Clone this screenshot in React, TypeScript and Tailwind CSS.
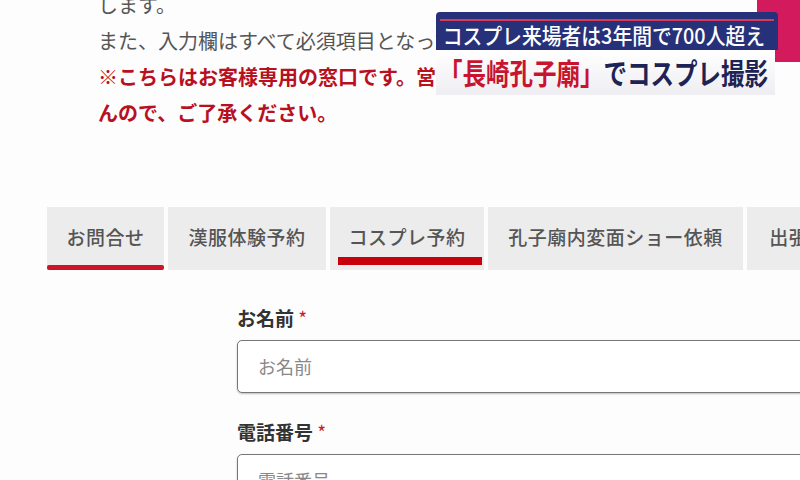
const jp = { fontFamily: '"Noto Sans CJK JP", "Noto Sans", sans-serif' }

const tabs = [
  { label: 'お問合せ', w: 'w-[117px]', line: 'thin' },
  { label: '漢服体験予約', w: 'w-[158px]', line: '' },
  { label: 'コスプレ予約', w: 'w-[154px]', line: 'thick' },
  { label: '孔子廟内変面ショー依頼', w: 'w-[255px]', line: '' },
  { label: '出張変面ショー依頼', w: 'w-[220px]', line: '' },
]

const Tab = ({ label, w, line }: { label: string; w: string; line: string }) => {
  return (
    <div className={`relative shrink-0 h-[63px] bg-[#ececec] flex items-center justify-center ${w}`}>
      <span className="text-[19px] tracking-[0.5px] text-[#555] font-medium whitespace-nowrap pb-[3px]">{label}</span>
      {line === 'thin' ? <div className="absolute left-0 right-0 bottom-0 h-[5px] bg-[#cf1228] rounded-[2px]"></div> : ''}
      {line === 'thick' ? <div className="absolute left-[8px] right-[2px] bottom-[5px] h-[8px] bg-[#c8000c]"></div> : ''}
    </div>
  )
}

const Field = ({ label, placeholder }: { label: string; placeholder: string }) => {
  return (
    <div className="flex flex-col">
      <div className="text-[19px] font-bold text-[#333] h-[34px] leading-[34px]">
        {label} <span className="text-[#d01a2a] font-normal">*</span>
      </div>
      <div className="mt-[5px] h-[53px] w-[600px] border-[1.5px] border-[#777] rounded-[5px] bg-white shadow-[0_1px_2px_rgba(0,0,0,0.25)] flex items-center pl-[20px]">
        <span className="text-[18px] text-[#888]">{placeholder}</span>
      </div>
    </div>
  )
}

export default function App() {
  return (
    <div className="relative w-[800px] h-[480px] overflow-hidden bg-[#fdfdfd]" style={jp}>
      <div className="pl-[98px] mt-[-13px] text-[20px] leading-[36px] whitespace-nowrap">
        <div className="text-[#555]">します。</div>
        <div className="text-[#555]">また、入力欄はすべて必須項目となっておりますので、ご入力をお願いいたします。</div>
        <div className="text-[#b8101e] font-bold">※こちらはお客様専用の窓口です。営業のお電話はお受けしておりませ</div>
        <div className="text-[#b8101e] font-bold">んので、ご了承ください。</div>
      </div>

      <div className="flex gap-[4px] pl-[47px] mt-[76px]">
        {tabs.map((t) => (
          <Tab key={t.label} label={t.label} w={t.w} line={t.line} />
        ))}
      </div>

      <div className="flex flex-col gap-[22px] pl-[237px] mt-[31px]">
        <Field label="お名前" placeholder="お名前" />
        <Field label="電話番号" placeholder="電話番号" />
      </div>

      {/* news caption overlay */}
      <div className="absolute right-0 top-0 w-[43px] h-[62px] bg-[#d21a5c]"></div>
      <div className="absolute left-[436px] top-[12px] w-[342px]">
        <div className="h-[38px] bg-[#27317a] rounded-t-[4px] pt-[7px] px-[4px] overflow-hidden">
          <div className="h-[2px] bg-[#d83a5a]"></div>
          <div className="text-white text-[22px] font-medium leading-[27px] whitespace-nowrap pl-[3px] origin-left scale-x-[0.9]">コスプレ来場者は3年間で700人超え</div>
        </div>
        <div className="h-[45px] w-[339px] bg-gradient-to-b from-[#ffffff] to-[#eeeef2] flex items-center pl-[3px] overflow-hidden">
          <span className="text-[29px] font-bold leading-none whitespace-nowrap origin-left scale-x-[0.81]">
            <span className="text-[#c8142e]">「長崎孔子廟」</span>
            <span className="text-[#1d2354]">でコスプレ撮影</span>
          </span>
        </div>
      </div>
    </div>
  )
}
